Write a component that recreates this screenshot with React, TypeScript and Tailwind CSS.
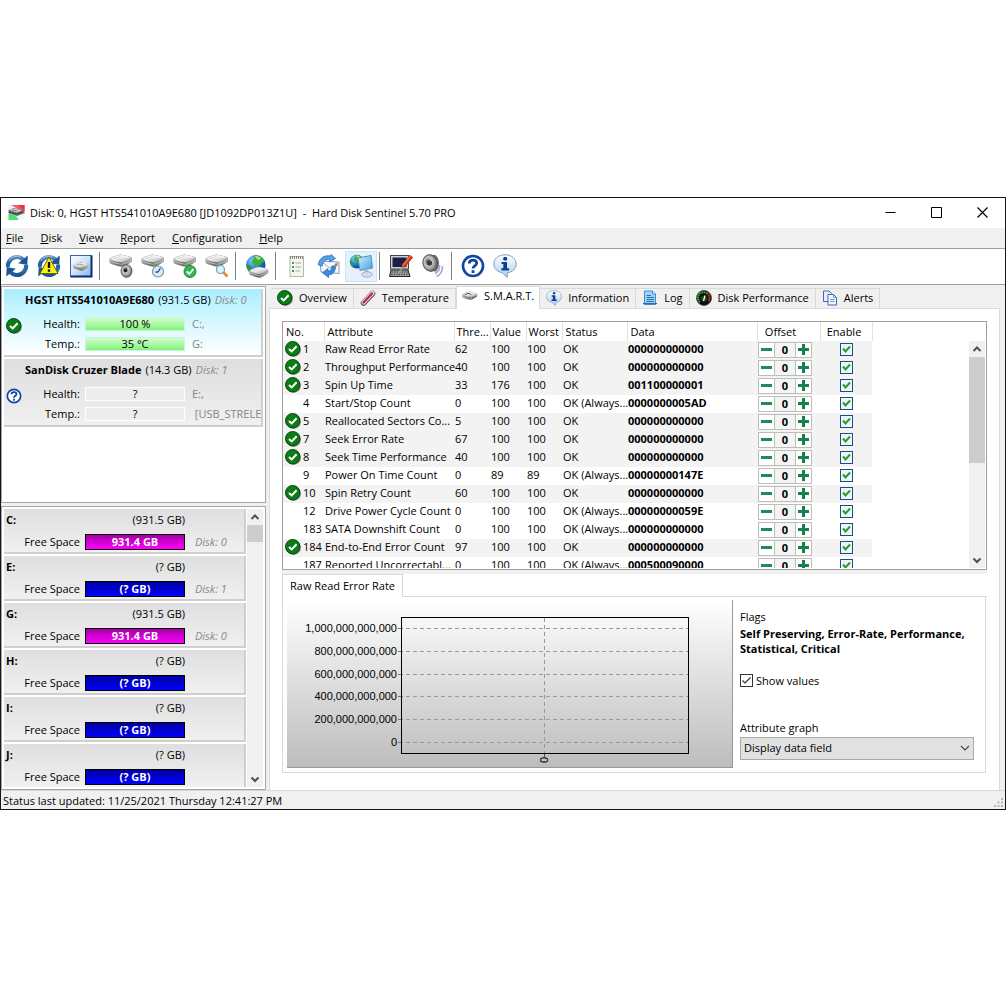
import type { ReactNode } from "react";
import clsx from "clsx";

type Attribute = {
  no: number;
  name: string;
  threshold: number;
  value: number;
  worst: number;
  status: string;
  data: string;
  critical?: boolean;
};

const attributes: Attribute[] = [
  { no: 1, name: "Raw Read Error Rate", threshold: 62, value: 100, worst: 100, status: "OK", data: "000000000000", critical: true },
  { no: 2, name: "Throughput Performance", threshold: 40, value: 100, worst: 100, status: "OK", data: "000000000000", critical: true },
  { no: 3, name: "Spin Up Time", threshold: 33, value: 176, worst: 100, status: "OK", data: "001100000001", critical: true },
  { no: 4, name: "Start/Stop Count", threshold: 0, value: 100, worst: 100, status: "OK (Always...", data: "0000000005AD" },
  { no: 5, name: "Reallocated Sectors Co...", threshold: 5, value: 100, worst: 100, status: "OK", data: "000000000000", critical: true },
  { no: 7, name: "Seek Error Rate", threshold: 67, value: 100, worst: 100, status: "OK", data: "000000000000", critical: true },
  { no: 8, name: "Seek Time Performance", threshold: 40, value: 100, worst: 100, status: "OK", data: "000000000000", critical: true },
  { no: 9, name: "Power On Time Count", threshold: 0, value: 89, worst: 89, status: "OK (Always...", data: "00000000147E" },
  { no: 10, name: "Spin Retry Count", threshold: 60, value: 100, worst: 100, status: "OK", data: "000000000000", critical: true },
  { no: 12, name: "Drive Power Cycle Count", threshold: 0, value: 100, worst: 100, status: "OK (Always...", data: "00000000059E" },
  { no: 183, name: "SATA Downshift Count", threshold: 0, value: 100, worst: 100, status: "OK (Always...", data: "000000000000" },
  { no: 184, name: "End-to-End Error Count", threshold: 97, value: 100, worst: 100, status: "OK", data: "000000000000", critical: true },
  { no: 187, name: "Reported Uncorrectabl...", threshold: 0, value: 100, worst: 100, status: "OK (Always...", data: "000500090000" }
];

const columns = [
  { label: "No.", className: "w-[41px] pl-[3px]" },
  { label: "Attribute", className: "w-[130px] pl-[3px]" },
  { label: "Thre...", className: "w-[36px] pl-[2px]" },
  { label: "Value", className: "w-[36px] pl-[2px]" },
  { label: "Worst", className: "w-[36px] pl-[2px]" },
  { label: "Status", className: "w-[65px] pl-[3px]" },
  { label: "Data", className: "w-[130px] pl-[3px]" },
  { label: "Offset", className: "w-[63px] pr-4 text-center" },
  { label: "Enable", className: "w-[52px] pr-1 text-center" }
];

const drives = [
  { letter: "C:", size: "(931.5 GB)", free: "931.4 GB", disk: "Disk: 0" },
  { letter: "E:", size: "(? GB)", free: "(? GB)", disk: "Disk: 1" },
  { letter: "G:", size: "(931.5 GB)", free: "931.4 GB", disk: "Disk: 0" },
  { letter: "H:", size: "(? GB)", free: "(? GB)", disk: "" },
  { letter: "I:", size: "(? GB)", free: "(? GB)", disk: "" },
  { letter: "J:", size: "(? GB)", free: "(? GB)", disk: "" }
];

const axis = [
  { y: 28, label: "1,000,000,000,000" },
  { y: 51, label: "800,000,000,000" },
  { y: 74, label: "600,000,000,000" },
  { y: 96, label: "400,000,000,000" },
  { y: 119, label: "200,000,000,000" },
  { y: 142, label: "0" }
];

function Gradients() {
  return (
    <svg className="absolute size-0" aria-hidden="true">
      <defs>
        <linearGradient id="metal" x1="0" y1="0" x2="1" y2="1">
          <stop offset="0" stopColor="#b5b5b5" />
          <stop offset="0.45" stopColor="#ededed" />
          <stop offset="1" stopColor="#9c9c9c" />
        </linearGradient>
        <linearGradient id="side" x1="0" y1="0" x2="1" y2="0">
          <stop offset="0" stopColor="#9b9b9b" />
          <stop offset="0.5" stopColor="#626262" />
          <stop offset="1" stopColor="#a9a9a9" />
        </linearGradient>
        <radialGradient id="globe" cx="0.35" cy="0.3" r="0.8">
          <stop offset="0" stopColor="#8fd3ff" />
          <stop offset="0.5" stopColor="#1c7fd6" />
          <stop offset="1" stopColor="#083a86" />
        </radialGradient>
        <linearGradient id="sync" x1="0" y1="0" x2="0" y2="24" gradientUnits="userSpaceOnUse">
          <stop offset="0" stopColor="#7ba6cf" />
          <stop offset="0.35" stopColor="#235f9d" />
          <stop offset="0.7" stopColor="#2d6cab" />
          <stop offset="1" stopColor="#14477f" />
        </linearGradient>
        <linearGradient id="screen" x1="0" y1="0" x2="1" y2="1">
          <stop offset="0" stopColor="#d4f1ff" />
          <stop offset="1" stopColor="#3a9fe8" />
        </linearGradient>
        <linearGradient id="tile" x1="0" y1="0" x2="1" y2="1">
          <stop offset="0" stopColor="#ffffff" />
          <stop offset="0.5" stopColor="#cfe2fa" />
          <stop offset="1" stopColor="#7fb0ee" />
        </linearGradient>
        <radialGradient id="cone" cx="0.4" cy="0.4" r="0.7">
          <stop offset="0" stopColor="#444" />
          <stop offset="0.4" stopColor="#c9c9c9" />
          <stop offset="1" stopColor="#555" />
        </radialGradient>
        <linearGradient id="bubble" x1="0" y1="0" x2="0" y2="1">
          <stop offset="0" stopColor="#ffffff" />
          <stop offset="1" stopColor="#a9cdf0" />
        </linearGradient>
      </defs>
    </svg>
  );
}

function Icon({ size = "size-6", box = 24, children }: { size?: string; box?: number; children: ReactNode }) {
  return (
    <svg className={clsx("shrink-0", size)} viewBox={`0 0 ${box} ${box}`} fill="none" aria-hidden="true">
      {children}
    </svg>
  );
}

function DriveShape() {
  return (
    <g>
      <path d="M0.500 4.800 C0.500 4 8 1 10.500 0.700 C13 0.500 21 2.200 23 3.500 V7.500 C20 10 15.500 12.500 13 12.800 C9 12.500 3 10.500 0.500 9Z" fill="url(#side)" />
      <path d="M0.500 4.800 C0.500 4 8 1 10.500 0.700 C13 0.500 21 2.200 23 3.500 C22 5 15.500 8 13 8.500 C9 8.300 2 6.500 0.500 4.800Z" fill="url(#metal)" />
      <path d="M3 4.500 C6 3 9 2 11 1.900 C14 2 17 2.600 19.500 3.300" stroke="#fff" strokeWidth="0.8" />
      <path d="M1 6.800 C4 8.500 9 9.800 12.500 10.300 C16 9.500 20 7.500 22.500 5.800" stroke="#c9c9c9" strokeWidth="0.900" />
      <rect x="12.500" y="10" width="2.400" height="1.800" fill="#4fc23b" />
    </g>
  );
}

function SyncShape() {
  return (
    <g>
      <path d="M2.800 13 C2.600 7 7 3 12 3 C15 3 17 4.200 18.500 6" stroke="url(#sync)" strokeWidth="4" />
      <path d="M22.800 1.500 L22.300 11 L13.200 9.300Z" fill="#1e5691" />
      <path d="M21.200 11 C21.400 17 17 21 12 21 C9 21 7 19.800 5.500 18" stroke="url(#sync)" strokeWidth="4" />
      <path d="M1.200 22.500 L1.700 13 L10.800 14.700Z" fill="#1e5691" />
      <path d="M4 7 C6 3 11 1.500 15 2.600" stroke="#b8d3ea" strokeWidth="0.800" />
    </g>
  );
}

function GlobeShape() {
  return (
    <g>
      <circle cx="10" cy="10" r="9" fill="url(#globe)" />
      <path d="M8 1.500 C13 0.500 17 3 18 6 C17 9 14 8 13 11 C11 13 9 10 7 9 C5 8 7 5 9 4Z" fill="#3fae3c" />
      <path d="M1.500 9 C4 10 6 12 5.500 14 L6 17.500 C3 16 1 13 1.500 9Z" fill="#2f9a34" />
      <path d="M9 2 C12 1.500 14 3 15 4.500 L12 5.500Z" fill="#a4e389" />
    </g>
  );
}

function OkIcon({ size = "size-4" }: { size?: string }) {
  return (
    <Icon size={size} box={16}>
      <circle cx="8.600" cy="8.700" r="7.300" fill="#8a8a8a" />
      <circle cx="7.700" cy="7.700" r="7.200" fill="#0b7d16" stroke="#053d08" strokeWidth="0.900" />
      <path d="M4 8 L6.700 10.400 L11.600 5.300" stroke="#fff" strokeWidth="2" />
    </Icon>
  );
}

function QuestionIcon({ size = "size-4" }: { size?: string }) {
  return (
    <Icon size={size}>
      <circle cx="12" cy="12" r="10" fill="#fff" stroke="#0f479f" strokeWidth="2.600" />
      <path d="M8.300 9.500 C8.300 5 15.800 5 15.700 9.300 C15.600 11.800 12 11.800 12 14.500" stroke="#0f479f" strokeWidth="2.800" />
      <rect x="10.600" y="16.200" width="2.800" height="2.800" fill="#0f479f" />
    </Icon>
  );
}

function InfoIcon({ size = "size-4" }: { size?: string }) {
  return (
    <Icon size={size}>
      <path d="M12 0.800 C18.500 0.800 23.200 4.800 23.200 10 C23.200 14.800 19.500 18 14.500 18.800 L14 23.500 L9.500 18.800 C4.500 18 0.800 14.800 0.800 10 C0.800 4.800 5.500 0.800 12 0.800Z" fill="url(#bubble)" stroke="#7f9fc2" />
      <rect x="10.300" y="3" width="3.800" height="3.400" rx="1.200" fill="#0d3f90" />
      <path d="M8.600 8 H14 V14.300 H16 V16.400 H8.400 V14.300 H10.300 V10 H8.600Z" fill="#0d3f90" />
    </Icon>
  );
}

function AppIcon() {
  return (
    <Icon size="size-[17px]" box={17}>
      <rect x="0.500" y="1" width="16" height="15" fill="#f4f4f4" />
      <path d="M3 1 H16.500 V10 L10 5Z" fill="#f5596a" />
      <path d="M10 1 H16.500 V7Z" fill="#ee2f42" />
      <path d="M0.500 9 L8 12 L11 16 H0.500Z" fill="#4be070" />
      <path d="M0.500 6 L6 4 L16 6.500 L15.500 9.500 L9 12 L0.500 9Z" fill="#6c6c6c" />
      <path d="M1 6 L6 4.500 L14 6.500 L8.500 8.500Z" fill="#d6d6d6" />
      <path d="M1 8 L8.500 10 L15 8" stroke="#2b2b2b" strokeDasharray="2 1" />
      <path d="M4 5.800 L9 7" stroke="#555" strokeWidth="0.800" />
    </Icon>
  );
}

function DriveMini() {
  return (
    <Icon size="size-4">
      <g transform="translate(0 5)">
        <DriveShape />
        <path d="M4 5.500 L9 3 L14 4.500 M15 10.500 L22 7" stroke="#555" strokeWidth="1.500" />
      </g>
    </Icon>
  );
}

const toolbar: { label: string; icon: ReactNode; active?: boolean }[][] = [
  [
    { label: "Refresh", icon: <Icon><SyncShape /></Icon> },
    {
      label: "Refresh with warning",
      icon: (
        <Icon>
          <SyncShape />
          <path d="M12 3 L21 19.500 H3Z" fill="#ffee1f" stroke="#6d6300" strokeLinejoin="round" />
          <path d="M12 8 V14" stroke="#111" strokeWidth="2.400" />
          <rect x="10.800" y="15.500" width="2.400" height="2.200" fill="#111" />
        </Icon>
      )
    },
    {
      label: "Disk overview",
      icon: (
        <Icon>
          <rect x="1.500" y="1.500" width="21" height="21" fill="url(#tile)" stroke="#3a62ac" />
          <path d="M1.500 22.500 H22.500 V1.500" stroke="#0a2a72" strokeWidth="2" />
          <g transform="translate(4 8) scale(0.680)">
            <DriveShape />
            <path d="M5 5 L10 3 L15 4.500" stroke="#777" />
          </g>
        </Icon>
      )
    }
  ],
  [
    {
      label: "Acoustic",
      icon: (
        <Icon>
          <DriveShape />
          <ellipse cx="17.500" cy="17" rx="5.500" ry="6.300" fill="url(#cone)" stroke="#444" strokeWidth="0.800" />
          <circle cx="16.500" cy="16.500" r="1.800" fill="#222" />
        </Icon>
      )
    },
    {
      label: "Schedule",
      icon: (
        <Icon>
          <DriveShape />
          <circle cx="17" cy="17.500" r="5.500" fill="#d9ecfa" stroke="#7794ad" strokeWidth="1.200" />
          <path d="M17 18 L19.500 14 M17 18 H14.500" stroke="#1c4c8f" strokeWidth="1.300" />
        </Icon>
      )
    },
    {
      label: "Test",
      icon: (
        <Icon>
          <DriveShape />
          <circle cx="17" cy="17.500" r="6" fill="#37b556" stroke="#1d853a" />
          <path d="M13.800 17.500 L16.300 20 L20.400 15" stroke="#fff" strokeWidth="1.800" />
        </Icon>
      )
    },
    {
      label: "Inspect",
      icon: (
        <Icon>
          <DriveShape />
          <path d="M18 18 L22.500 22.500" stroke="#e08b35" strokeWidth="2.600" />
          <circle cx="15.500" cy="15.500" r="4" fill="#d8f1ff" stroke="#6d9dc4" strokeWidth="1.200" />
        </Icon>
      )
    }
  ],
  [
    {
      label: "Online",
      icon: (
        <Icon>
          <g transform="scale(1.080)"><GlobeShape /></g>
          <g transform="translate(4 12.500) scale(0.840 0.880)"><DriveShape /></g>
        </Icon>
      )
    }
  ],
  [
    {
      label: "Report",
      icon: (
        <Icon>
          <path d="M5 2.500 H18.500 V22.500 H5Z" fill="#f5f5ee" stroke="#b5b5a8" />
          <path d="M5 3.500 H18.500" stroke="#777" strokeWidth="2.600" strokeDasharray="1 1" />
          <path d="M7 9 H9 M7 13 H9 M7 17 H9" stroke="#43a047" strokeWidth="1.800" />
          <path d="M10.500 9 H16 M10.500 13 H16 M10.500 17 H15" stroke="#a9a9a9" />
        </Icon>
      )
    },
    {
      label: "Send",
      icon: (
        <Icon>
          <path d="M3 7 L22 8 V19.500 L4 18Z" fill="#f3f8fd" stroke="#7f9dbd" />
          <path d="M4 7.500 L13 14 L21.500 8.500" stroke="#9db4cc" />
          <rect x="18" y="9.500" width="2.400" height="2.600" fill="#e2632d" />
          <path d="M1.500 11 C1.500 4 8 0.800 13 2 L14 0.500 L18.500 4.500 L12.500 8 L12.800 5.500 C9 5 6 7 5.200 12Z" fill="#5b9fe6" stroke="#1c5fae" strokeWidth="0.700" />
          <path d="M18.500 12.500 C18.500 18 15 21 11.500 21 L11.500 23.500 L5.500 18.800 L11 14.500 L11.200 17.500 C13.500 17 14.800 15 15 12Z" fill="#3f88dc" stroke="#1c5fae" strokeWidth="0.700" />
        </Icon>
      )
    },
    {
      label: "Network",
      active: true,
      icon: (
        <Icon>
          <g transform="scale(0.760)"><GlobeShape /></g>
          <path d="M9 4 L22 1.500 L23.500 14 L11 16.500Z" fill="url(#screen)" stroke="#5d8fbd" />
          <path d="M15 16 L19 15.300 L20 19 H16Z" fill="#b3bed0" />
          <ellipse cx="18" cy="20.500" rx="5.300" ry="2.700" fill="#d8dcef" stroke="#8f98b8" strokeWidth="0.700" />
        </Icon>
      )
    }
  ],
  [
    {
      label: "Display settings",
      icon: (
        <Icon>
          <rect x="1.500" y="1.500" width="18" height="13.500" fill="#d0d0d0" stroke="#444" />
          <rect x="3.500" y="3.500" width="14" height="9.500" fill="#16204f" />
          <path d="M2 16 H19 L21 22.500 H0.500Z" fill="#a5a5a5" stroke="#222" />
          <path d="M2.500 18 H19 M2 20.300 H20" stroke="#333" strokeDasharray="1.500 1" />
          <path d="M10 18.500 L15.500 11" stroke="#999" strokeWidth="1.800" />
          <path d="M14 12.500 L22.500 2" stroke="#c93c14" strokeWidth="4.200" />
          <path d="M14 11.500 L21.500 2" stroke="#f58a55" strokeWidth="1.100" />
        </Icon>
      )
    },
    {
      label: "Sound",
      icon: (
        <Icon>
          <path d="M4 2.500 L14 0.800 C19.500 5 19 13 15 17.500 L9 17 C3 14 1 8 4 2.500Z" fill="#6b6b6b" />
          <ellipse cx="9" cy="9" rx="7" ry="8.300" transform="rotate(-15 9 9)" fill="url(#cone)" stroke="#555" />
          <circle cx="8.500" cy="9" r="2.600" fill="#3b3b3b" />
          <path d="M18.500 11 C19 15 17 18 14 19.500 M21.500 12 C22 17 19 21 15.500 22.500" stroke="#a9a9cf" strokeWidth="1.600" />
        </Icon>
      )
    }
  ],
  [
    { label: "Help", icon: <QuestionIcon size="size-6" /> },
    { label: "About", icon: <InfoIcon size="size-6" /> }
  ]
];

const tabs: { label: string; icon: ReactNode; active?: boolean }[] = [
  { label: "Overview", icon: <OkIcon /> },
  {
    label: "Temperature",
    icon: (
      <Icon size="size-4" box={16}>
        <path d="M3.500 13 L12.500 3.500" stroke="#555" strokeWidth="5.600" strokeLinecap="round" />
        <path d="M3.500 12.500 L12.500 3" stroke="#ead6de" strokeWidth="4.200" strokeLinecap="round" />
        <path d="M3.500 12.500 L12 3.500" stroke="#b81f52" strokeWidth="2.200" strokeLinecap="round" />
      </Icon>
    )
  },
  { label: "S.M.A.R.T.", icon: <DriveMini />, active: true },
  { label: "Information", icon: <InfoIcon /> },
  {
    label: "Log",
    icon: (
      <Icon size="size-4" box={16}>
        <path d="M2.500 1 H10.500 L13.500 4 V14.500 H2.500Z" fill="#a8d5f7" stroke="#3d8dcc" />
        <path d="M10.500 1 V4 H13.500" fill="#fff" stroke="#3d8dcc" />
        <path d="M4.500 5.500 H9 M4.500 7.500 H12 M4.500 9.500 H12 M4.500 11.500 H12 M1 13.500 H15" stroke="#1f6fb5" />
      </Icon>
    )
  },
  {
    label: "Disk Performance",
    icon: (
      <Icon size="size-4" box={16}>
        <circle cx="8" cy="8" r="7.500" fill="#0c0c0c" stroke="#555" />
        <path d="M4 12 A5.500 5.500 0 0 1 11 3.500" stroke="#2fc443" strokeWidth="1.800" strokeDasharray="1.500 0.700" />
        <path d="M11 3.500 A5.500 5.500 0 0 1 12.500 11" stroke="#df3d27" strokeWidth="1.800" strokeDasharray="1.500 0.700" />
        <circle cx="8" cy="8.500" r="3" fill="#1d4a1f" />
        <path d="M7.500 11 L9 5.500" stroke="#fff" strokeWidth="1.200" />
      </Icon>
    )
  },
  {
    label: "Alerts",
    icon: (
      <Icon size="size-4" box={16}>
        <path d="M1.500 1 H7 L9.500 3.500 V11.500 H1.500Z" fill="#e6eefb" stroke="#4268b3" />
        <path d="M6 4.500 H11.500 L14.500 7.500 V15 H6Z" fill="#f4f8ff" stroke="#4268b3" />
        <path d="M11.500 4.500 V7.500 H14.500 M8 9.500 H12.500 M8 11.500 H12.500" stroke="#6f92d2" />
      </Icon>
    )
  }
];

function Chevron({ up }: { up?: boolean }) {
  return (
    <Icon size="size-4" box={16}>
      <path d={up ? "M4.500 10 L8 6.500 L11.500 10" : "M4.500 6.500 L8 10 L11.500 6.500"} stroke="#505050" strokeWidth="2" />
    </Icon>
  );
}

function ScrollBar({ thumb }: { thumb: string }) {
  return (
    <div className="flex w-4 shrink-0 flex-col bg-[#f0f0f0]">
      <button aria-label="Scroll up"><Chevron up /></button>
      <div className={clsx("bg-[#cdcdcd]", thumb)} />
      <button aria-label="Scroll down" className="mt-auto"><Chevron /></button>
    </div>
  );
}

function Meter({ value, ok }: { value: string; ok?: boolean }) {
  return (
    <span
      className={clsx(
        "flex h-[14px] w-[100px] items-center justify-center border",
        ok ? "border-[#c8f5e0] bg-linear-to-b from-[#d3fbd0] to-[#7ff477]" : "border-white bg-[#ededed]"
      )}
    >
      {value}
    </span>
  );
}

type DiskCardProps = {
  name: string;
  size: string;
  disk: string;
  health: string;
  temp: string;
  volumes: [string, string];
  selected?: boolean;
};

function DiskCard({ name, size, disk, health, temp, volumes, selected }: DiskCardProps) {
  return (
    <article
      className={clsx(
        "flex h-[68px] overflow-hidden border-r-2 border-b-2 border-[#cfcfcf] bg-linear-to-b whitespace-nowrap",
        selected ? "from-[#a8efff] to-white" : "from-[#dedede] to-[#f0f0f0]"
      )}
    >
      <div className="flex w-[21px] shrink-0 items-center pt-2 pl-[2px]">
        {selected ? <OkIcon /> : <QuestionIcon />}
      </div>
      <div className="flex-1 pt-[3px]">
        <h2 className="flex h-4 items-center gap-1">
          <b>{name}</b>
          <span>{size}</span>
          <i className="text-[#8a8a8a]">{disk}</i>
        </h2>
        <dl className="grid grid-cols-[55px_100px_1fr] gap-x-[5px] pt-[6px] leading-5">
          <dt className="text-right">Health:</dt>
          <dd className="flex items-center"><Meter value={health} ok={selected} /></dd>
          <dd className="pl-[2px] text-[#858585]">{volumes[0]}</dd>
          <dt className="text-right">Temp.:</dt>
          <dd className="flex items-center"><Meter value={temp} ok={selected} /></dd>
          <dd className="pl-[2px] text-[#858585]">{volumes[1]}</dd>
        </dl>
      </div>
    </article>
  );
}

function Sidebar() {
  return (
    <aside className="flex w-[265px] shrink-0 flex-col gap-[3px] pt-px">
      <section className="flex h-[217px] flex-col gap-[2px] border border-[#a5a5a5] bg-white p-[2px]">
        <DiskCard name="HGST HTS541010A9E680" size="(931.5 GB)" disk="Disk: 0" health="100 %" temp="35 °C" volumes={["C:,", "G:"]} selected />
        <DiskCard name="SanDisk Cruzer Blade" size="(14.3 GB)" disk="Disk: 1" health="?" temp="?" volumes={["E:,", "\u00a0[USB_STRELEC"]} />
      </section>
      <section className="flex h-[284px] gap-px border border-[#a5a5a5] bg-white p-[2px]">
        <div className="flex flex-1 flex-col gap-[2px] overflow-hidden">
          {drives.map((drive) => (
            <article
              key={drive.letter}
              className="flex h-[45px] shrink-0 flex-col border-r-2 border-b-2 border-[#cfcfcf] bg-linear-to-b from-[#dfdfdf] to-[#f0f0f0]"
            >
              <div className="flex h-[22px] w-[181px] items-center justify-between pl-[2px]">
                <b>{drive.letter}</b>
                <span>{drive.size}</span>
              </div>
              <div className="grid h-[21px] grid-cols-[76px_100px_1fr] items-center gap-x-[5px] pt-px">
                <span className="text-right">Free Space</span>
                <b
                  className={clsx(
                    "flex h-4 items-center justify-center border border-black bg-linear-to-b text-white",
                    drive.free === "931.4 GB" ? "from-[#a400a4] to-[#ff00ff]" : "from-[#0000a0] to-[#0000ff]"
                  )}
                >
                  {drive.free}
                </b>
                <i className="pl-[5px] text-[#8a8a8a]">{drive.disk}</i>
              </div>
            </article>
          ))}
        </div>
        <ScrollBar thumb="h-[17px]" />
      </section>
    </aside>
  );
}

function OffsetControl() {
  return (
    <div className="ml-px flex h-4 w-[54px] border border-[#bdbdbd] bg-white">
      <button aria-label="Decrease offset" className="flex w-[15px] items-center justify-center">
        <span className="h-[3px] w-[11px] bg-[#1f8a5a]" />
      </button>
      <output className="flex flex-1 items-center justify-center border-x border-[#bdbdbd] bg-[#f4f4f4] font-bold">0</output>
      <button aria-label="Increase offset" className="flex w-[15px] items-center justify-center">
        <Icon size="size-[11px]" box={11}><path d="M0 5.500 H11 M5.500 0 V11" stroke="#17804f" strokeWidth="3" /></Icon>
      </button>
    </div>
  );
}

function AttributeTable() {
  return (
    <div className="flex h-[249px] overflow-hidden border border-[#a0a0a0] bg-white pr-px pb-px">
      <div className="flex-1 overflow-hidden">
        <table className="w-[589px] table-fixed border-collapse text-left whitespace-nowrap">
          <thead>
            <tr className="h-[19px]">
              {columns.map((column) => (
                <th key={column.label} className={clsx("border-r border-[#e2e2e2] p-0 pt-px font-normal", column.className)}>
                  {column.label}
                </th>
              ))}
            </tr>
          </thead>
          <tbody>
            {attributes.map((row) => (
              <tr key={row.no} className={clsx("h-[18px]", row.critical && "bg-[#f3f3f3]")}>
                <td className="p-0 pb-[2px] pl-[2px]">
                  <span className="flex items-center gap-[2px]">
                    {row.critical ? <OkIcon /> : <span className="w-4" />}
                    {row.no}
                  </span>
                </td>
                <td className="p-0 pb-[2px] pl-px">{row.name}</td>
                <td className="p-0 pb-[2px] pl-px">{row.threshold}</td>
                <td className="p-0 pb-[2px] pl-px">{row.value}</td>
                <td className="p-0 pb-[2px] pl-px">{row.worst}</td>
                <td className="p-0 pb-[2px] pl-px">{row.status}</td>
                <td className="p-0 pb-[2px] pl-px font-bold">{row.data}</td>
                <td className="p-0"><OffsetControl /></td>
                <td className="p-0">
                  <label className="grid size-full place-items-center">
                    <input
                      type="checkbox"
                      defaultChecked
                      aria-label={`Enable ${row.name}`}
                      className="col-start-1 row-start-1 size-[13px] appearance-none border border-[#1d4f86] bg-[#eef5f8]"
                    />
                    <svg className="pointer-events-none col-start-1 row-start-1 size-[13px]" viewBox="0 0 13 13" fill="none" aria-hidden="true">
                      <path d="M3 5.500 L5.500 8.500 L10 3.500" stroke="#2a9a2c" strokeWidth="2" />
                    </svg>
                  </label>
                </td>
              </tr>
            ))}
          </tbody>
        </table>
      </div>
      <div className="flex pt-[19px]">
        <ScrollBar thumb="h-[106px]" />
      </div>
    </div>
  );
}

function Graph() {
  return (
    <div className="min-w-0 flex-1 border-r border-b border-[#999] bg-linear-to-b from-white to-[#bdbdbd]">
      <svg className="h-[167px] w-full" viewBox="0 0 445 167" fill="none" aria-label="Raw Read Error Rate graph">
        {axis.map((tick) => (
          <g key={tick.label}>
            <text x="110" y={tick.y + 4} textAnchor="end" fill="#000" className="font-['Liberation_Sans'] text-[11px]">
              {tick.label}
            </text>
            <path d={`M111 ${tick.y + 0.5} H116`} stroke="#5a7f96" />
            <path d={`M119 ${tick.y + 0.5} H402`} stroke="#9a9a9a" strokeDasharray="4 3" />
          </g>
        ))}
        <path d="M257.500 18 V153" stroke="#9a9a9a" strokeDasharray="4 3" />
        <path d="M257.500 154 V157" stroke="#555" />
        <rect x="114.500" y="17.500" width="287" height="136" stroke="#000" />
        <text transform="translate(261 163) rotate(-90)" fill="#000" className="font-['Liberation_Sans'] text-[11px]">
          0
        </text>
      </svg>
    </div>
  );
}

function AttributeDetails() {
  return (
    <section className="flex flex-col">
      <div className="flex">
        <h3 className="border border-b-0 border-[#d9d9d9] px-[7px] leading-[22px]">Raw Read Error Rate</h3>
        <div className="flex-1 border-b border-[#d9d9d9]" />
      </div>
      <div className="mr-px flex border border-t-0 border-[#d9d9d9] pt-[3px] pr-[11px] pb-1 pl-1">
        <Graph />
        <div className="flex w-[241px] shrink-0 flex-col pt-[9px] pl-[7px]">
          <h4 className="leading-[15px]">Flags</h4>
          <p className="pt-[2px] leading-[15px] font-bold">Self Preserving, Error-Rate, Performance, Statistical, Critical</p>
          <label className="flex items-center gap-[3px] pt-[17px] leading-[15px]">
            <span className="grid">
              <input type="checkbox" defaultChecked className="col-start-1 row-start-1 size-[13px] appearance-none border border-[#333] bg-white" />
              <svg className="pointer-events-none col-start-1 row-start-1 size-[13px]" viewBox="0 0 13 13" fill="none" aria-hidden="true">
                <path d="M2.500 6.500 L5 9 L10.500 3.500" stroke="#333" strokeWidth="1.200" />
              </svg>
            </span>
            Show values
          </label>
          <label htmlFor="graph-mode" className="pt-8 leading-[15px]">Attribute graph</label>
          <div className="mt-[2px] grid items-center">
            <select
              id="graph-mode"
              className="col-start-1 row-start-1 h-[23px] appearance-none border border-[#a8a8a8] bg-[#e1e1e1] pl-[3px]"
            >
              <option>Display data field</option>
            </select>
            <svg className="pointer-events-none col-start-1 row-start-1 mr-1 size-[10px] justify-self-end" viewBox="0 0 10 10" fill="none" aria-hidden="true">
              <path d="M1 3 L5 7 L9 3" stroke="#444" strokeWidth="1.100" />
            </svg>
          </div>
        </div>
      </div>
    </section>
  );
}

function MainPanel() {
  return (
    <main className="flex min-w-0 flex-1 flex-col pr-[5px] pl-[3px]">
      <nav className="flex h-[23px] items-end pl-[2px]">
        {tabs.map((tab) => (
          <button
            key={tab.label}
            className={clsx(
              "flex items-center gap-[6px] border-[#d9d9d9] whitespace-nowrap",
              tab.active ? "relative z-10 -mb-px h-[23px] border-x border-t bg-white px-[5px] pb-[3px]" : "h-5 border-t border-r bg-[#f0f0f0] px-[6px]"
            )}
          >
            {tab.icon}
            {tab.label}
          </button>
        ))}
      </nav>
      <div className="flex flex-1 flex-col border-x border-t border-[#dcdcdc] bg-white px-3 pt-3">
        <AttributeTable />
        <div className="h-1 bg-[#f0f0f0]" />
        <AttributeDetails />
      </div>
    </main>
  );
}

export default function App() {
  return (
    <div className="flex min-h-screen items-center bg-white font-['Open_Sans',sans-serif] text-[11px] leading-4 text-black">
      <Gradients />
      <div className="flex w-full flex-col border border-[#15151d] bg-[#f0f0f0]">
        <header className="flex h-[30px] items-center bg-white pl-[7px]">
          <AppIcon />
          <h1 className="flex-1 pl-[5px] whitespace-pre">Disk: 0, HGST HTS541010A9E680 [JD1092DP013Z1U]  -  Hard Disk Sentinel 5.70 PRO</h1>
          <div className="flex">
            <button aria-label="Minimize" className="flex w-[46px] justify-center">
              <Icon size="size-[11px]" box={11}><path d="M0.500 5.500 H10.500" stroke="#000" /></Icon>
            </button>
            <button aria-label="Maximize" className="flex w-[46px] justify-center">
              <Icon size="size-[11px]" box={11}><path d="M0.500 0.500 H10.500 V10.500 H0.500Z" stroke="#000" /></Icon>
            </button>
            <button aria-label="Close" className="flex w-[46px] justify-center">
              <Icon size="size-[11px]" box={11}><path d="M0.500 0.500 L10.500 10.500 M10.500 0.500 L0.500 10.500" stroke="#000" strokeWidth="1.200" /></Icon>
            </button>
          </div>
        </header>
        <nav className="flex h-[21px] items-center gap-[17px] border-b border-[#a0a0a0] pl-[5px]">
          {["File", "Disk", "View", "Report", "Configuration", "Help"].map((item) => (
            <button key={item}>
              <u>{item[0]}</u>
              {item.slice(1)}
            </button>
          ))}
        </nav>
        <div className="flex h-9 items-center border-b border-[#a0a0a0] bg-white">
          {toolbar.map((group, index) => (
            <div key={group[0].label} className="flex items-center">
              {index > 0 && <span className="mr-[5px] ml-[2px] h-7 w-px bg-[#808080]" />}
              {group.map((item) => (
                <button
                  key={item.label}
                  aria-label={item.label}
                  className={clsx("flex h-[31px] w-8 items-center justify-center border", item.active ? "border-[#cce4f7] bg-[#e5f1fb]" : "border-transparent")}
                >
                  {item.icon}
                </button>
              ))}
            </div>
          ))}
        </div>
        <div className="flex">
          <Sidebar />
          <MainPanel />
        </div>
        <footer className="flex h-[19px] items-center justify-between border-t border-[#d7d7d7] pt-[2px] pl-[2px]">
          <span>Status last updated: 11/25/2021 Thursday 12:41:27 PM</span>
          <svg className="size-[11px] self-end" viewBox="0 0 11 11" fill="#b5b5b5" aria-hidden="true">
            <path d="M7 0h2v2h-2z M7 3.500h2v2h-2z M3.500 3.500h2v2h-2z M7 7h2v2h-2z M3.500 7h2v2h-2z M0 7h2v2h-2z" />
          </svg>
        </footer>
      </div>
    </div>
  );
}
